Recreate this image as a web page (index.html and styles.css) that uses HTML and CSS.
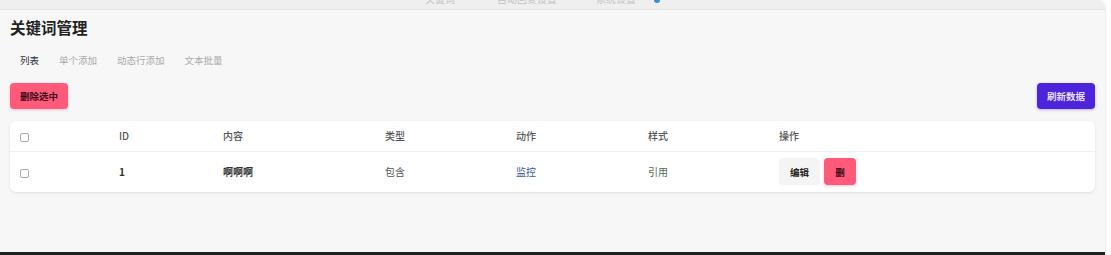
FILE: index.html
```html
<!DOCTYPE html>
<html>
	<head>
		<title>关键词管理</title>
		<link rel="stylesheet" href="styles.css">
	</head>
	<body>
		<div class="window">
			<div class="topbar">
				<span class="nav-item n1">关键词</span>
				<span class="nav-item n2">自动回复设置</span>
				<span class="nav-item n3">系统设置</span>
				<span class="nav-dot"></span>
			</div>
			<div class="page">
				<h1>关键词管理</h1>
				<div class="tabs">
					<span class="tab active">列表</span>
					<span class="tab">单个添加</span>
					<span class="tab">动态行添加</span>
					<span class="tab">文本批量</span>
				</div>
				<div class="toolbar">
					<button class="btn danger">删除选中</button>
					<button class="btn primary">刷新数据</button>
				</div>
				<div class="card">
					<table class="grid">
						<colgroup>
							<col class="c1"><col class="c2"><col class="c3"><col class="c4"><col class="c5"><col class="c6"><col>
						</colgroup>
						<thead>
							<tr>
								<td><span class="check"></span></td>
								<td>ID</td>
								<td>内容</td>
								<td>类型</td>
								<td>动作</td>
								<td>样式</td>
								<td>操作</td>
							</tr>
						</thead>
						<tbody>
							<tr>
								<td><span class="check"></span></td>
								<td class="strong">1</td>
								<td class="strong">啊啊啊</td>
								<td>包含</td>
								<td class="link">监控</td>
								<td class="green">引用</td>
								<td class="ops">
									<button class="btn light">编辑</button>
									<button class="btn danger">删</button>
								</td>
							</tr>
						</tbody>
					</table>
				</div>
			</div>
		</div>
	</body>
</html>
```

FILE: styles.css
```css
html, body {
	margin: 0;
	padding: 0;
	background: #ffffff;
}
body {
	font-family: "Noto Sans CJK SC", "Noto Sans", sans-serif;
	color: #333;
}
.window {
	width: 1105px;
	height: 252px;
	background: #f7f7f7;
	border-top-right-radius: 8px;
	border-bottom: 3px solid #1f1f1f;
	box-shadow: 1px 0 2px rgba(0,0,0,0.08);
	overflow: hidden;
}
.topbar {
	height: 9px;
	background: #efefef;
	border-bottom: 1px solid #e4e4e4;
	position: relative;
	overflow: hidden;
}
.nav-item {
	position: absolute;
	top: -9px;
	font-size: 10px;
	color: #c4c4c4;
}
.n1 { left: 425px; }
.n2 { left: 497px; }
.n3 { left: 596px; }
.nav-dot {
	position: absolute;
	left: 654px;
	top: -3px;
	width: 6px;
	height: 6px;
	border-radius: 50%;
	background: #2f8ee6;
}
.page {
	padding: 0 10px;
}
h1 {
	margin: 0;
	padding-top: 6px;
	font-size: 15.5px;
	line-height: 22px;
	font-weight: 700;
	color: #222;
}
.tabs {
	display: flex;
	gap: 20px;
	padding: 0 10px;
	margin-top: 15px;
	font-size: 9.5px;
	line-height: 14px;
	color: #aaa;
}
.tab.active {
	color: #333;
}
.toolbar {
	display: flex;
	justify-content: space-between;
	margin-top: 16px;
}
.btn {
	border: none;
	border-radius: 4px;
	font-family: inherit;
	font-size: 9.5px;
	font-weight: 700;
	height: 26px;
	padding: 0 10px;
	cursor: pointer;
}
.btn.danger {
	background: #ff5a7a;
	color: #3a0914;
	box-shadow: 0 1px 3px rgba(255,90,122,0.35);
}
.btn.primary {
	background: #4b24dc;
	color: #e6ddff;
	box-shadow: 0 1px 3px rgba(75,36,220,0.35);
}
.ops .btn {
	height: 27px;
	padding: 0 11px;
	margin-right: 2px;
	vertical-align: middle;
}
.btn.light {
	background: #f4f4f4;
	color: #222;
}
.card {
	margin-top: 12px;
	background: #fff;
	border-radius: 6px;
	box-shadow: 0 1px 3px rgba(0,0,0,0.1);
}
.grid {
	width: 100%;
	border-collapse: collapse;
	table-layout: fixed;
	font-size: 10px;
	color: #555;
}
.c1 { width: 99px; }
.c2 { width: 104px; }
.c3 { width: 162px; }
.c4 { width: 131px; }
.c5 { width: 132px; }
.c6 { width: 131px; }
.grid td {
	padding: 0 10px;
}
thead tr {
	height: 30px;
	border-bottom: 1px solid #f1f1f1;
}
thead td {
	font-weight: 500;
	color: #555;
}
tbody tr {
	height: 41px;
}
.strong {
	font-weight: 700;
	color: #333;
}
.link {
	color: #3c5a96;
}
.green {
	color: #4f6a5a;
}
.check {
	display: inline-block;
	width: 7px;
	height: 7px;
	border: 1px solid #aaa;
	border-radius: 2px;
	vertical-align: middle;
}
```
